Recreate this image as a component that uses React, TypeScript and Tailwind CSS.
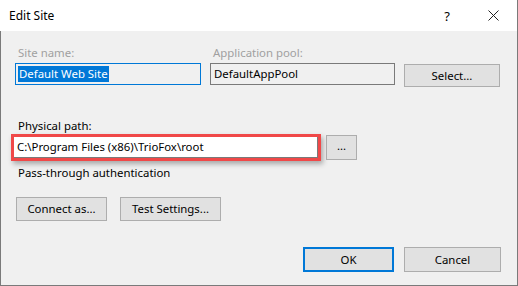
export default function App() {
  return (
    <div className="w-[518px] h-[286px] flex flex-col bg-white text-[11.4px] leading-[16px] text-black font-['Noto_Sans',sans-serif] overflow-hidden">
      {/* Title bar */}
      <div className="h-[31px] flex items-center bg-white border-r border-[#7a7a7a]">
        <span className="ml-[9px] flex-1 text-[12px]">Edit Site</span>
        <span className="w-[46px] text-center text-[13px]">?</span>
        <span className="w-[46px] flex justify-center mr-[1px]">
          <svg width="11" height="11" viewBox="0 0 11 11" stroke="#222" strokeWidth="1">
            <path d="M0.5 0.5L10.5 10.5M10.5 0.5L0.5 10.5" />
          </svg>
        </span>
      </div>

      {/* Body */}
      <div className="flex-1 bg-[#f0f0f0] border-l border-r border-b border-[#7a7a7a] pl-[14px] pt-[14px]">
        {/* Site name / app pool */}
        <div className="flex items-start">
          <div className="w-[186px] flex flex-col">
            <span className="pl-[3px] text-[#a0a0a0]">Site name:</span>
            <div className="mt-[2px] h-[22px] border border-[#0078d7] bg-[#f0f0f0] flex items-center pl-[2px]">
              <span className="bg-[#0078d7] text-white px-[1px] leading-[16px]">Default Web Site</span>
            </div>
          </div>
          <div className="ml-[9px] w-[185px] flex flex-col">
            <span className="pl-[3px] text-[#a0a0a0]">Application pool:</span>
            <div className="mt-[2px] h-[22px] border border-[#7a7a7a] bg-[#f0f0f0] flex items-center pl-[3px]">
              DefaultAppPool
            </div>
          </div>
          <button className="ml-[9px] mt-[19px] w-[96px] h-[23px] bg-[#e1e1e1] border border-[#adadad] flex items-center justify-center">
            Select...
          </button>
        </div>

        {/* Physical path */}
        <div className="mt-[31px] pl-[3px]">Physical path:</div>
        <div className="-ml-[4px] flex items-center">
          <div className="w-[310px] h-[27px] border-[3px] border-[#f04848] shadow-[2px_3px_5px_rgba(0,0,0,0.3)] bg-white">
            <div className="h-full border border-[#7a7a7a] border-l-0 border-t-0 flex items-center pl-[3px]">
              C:\Program Files (x86)\TrioFox\root
            </div>
          </div>
          <button className="ml-[5px] w-[31px] h-[25px] bg-[#e1e1e1] border border-[#adadad] flex items-center justify-center leading-none pb-[3px]">
            ...
          </button>
        </div>
        <div className="mt-[4px] pl-[3px]">Pass-through authentication</div>

        {/* Connect / test */}
        <div className="mt-[16px] flex">
          <button className="ml-[1px] w-[91px] h-[24px] bg-[#e1e1e1] border border-[#adadad] flex items-center justify-center">
            Connect as...
          </button>
          <button className="ml-[13px] w-[101px] h-[24px] bg-[#e1e1e1] border border-[#adadad] flex items-center justify-center">
            Test Settings...
          </button>
        </div>

        {/* OK / Cancel */}
        <div className="mt-[26px] flex justify-end pr-[16px]">
          <button className="w-[91px] h-[25px] bg-[#e1e1e1] border-2 border-[#0078d7] flex items-center justify-center">
            OK
          </button>
          <button className="ml-[10px] w-[97px] h-[25px] bg-[#e1e1e1] border border-[#adadad] flex items-center justify-center">
            Cancel
          </button>
        </div>
      </div>
    </div>
  );
}
